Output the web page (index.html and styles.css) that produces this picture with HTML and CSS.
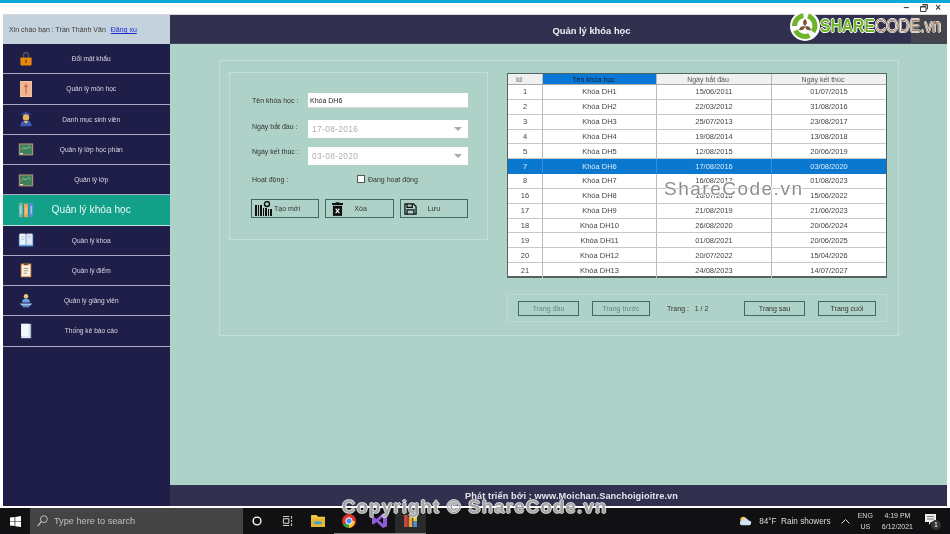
FILE: index.html
```html
<!DOCTYPE html>
<html lang="vi">
<head>
<meta charset="utf-8">
<title>Quản lý khóa học</title>
<link rel="stylesheet" href="styles.css">
</head>
<body>
<div class="screen">
  <div class="accent"></div>
  <div class="titlebar">
    <span class="winbtn">&#8211;</span>
    <svg class="winbtn-ico" width="8" height="8" viewBox="0 0 8 8"><path d="M2.500 .5h5v4.500h-1.500M.5 2.500h5.500v5h-5.500z" fill="none" stroke="#444"/><path d="M.5 3h5.500M2.500 1h5" stroke="#444"/></svg>
    <span class="winbtn close">&#215;</span>
  </div>
  <div class="app">
    <aside class="sidebar">
      <div class="greeting">Xin chào bạn : Trần Thành Văn <a href="#" class="logout">Đăng xu</a></div>
      <nav class="nav">
        <a class="nav-item"><svg class="nav-ico" viewBox="0 0 20 20"><path d="M7 8V5a3 3 0 0 1 6 0v3" fill="none" stroke="#5a5a5a" stroke-width="1.500"/><rect x="3" y="8" width="14" height="10" rx="1" fill="#e58a10"/><rect x="9" y="11" width="2" height="4" fill="#8a4a06"/></svg><span>Đổi mật khẩu</span></a>
        <a class="nav-item"><svg class="nav-ico" viewBox="0 0 20 20"><rect x="3" y="0" width="14" height="20" fill="#f2b48c" stroke="#f8d8c0"/><path d="M10 3v13M7.500 6.500h5" stroke="#9c4a2c"/></svg><span>Quản lý môn học</span></a>
        <a class="nav-item"><svg class="nav-ico" viewBox="0 0 20 20"><path d="M10 1l7 3-7 3-7-3z" fill="#34489a"/><circle cx="10" cy="8" r="4" fill="#e9b55a"/><path d="M3 19c0-5 3-7 7-7s7 2 7 7z" fill="#3f5bb8"/><path d="M7 12.500h6L10 16z" fill="#e9c25a"/></svg><span>Danh mục sinh viên</span></a>
        <a class="nav-item"><svg class="nav-ico" viewBox="0 0 20 20"><rect x="1" y="3" width="18" height="15" fill="#a98f70"/><rect x="2.500" y="4.500" width="15" height="12" fill="#3f7f5a"/><path d="M4 11l3-3 3 2 3-3 3 2" fill="none" stroke="#bfe3c8" stroke-width=".8"/><rect x="3" y="15" width="3" height="1.500" fill="#fff"/></svg><span>Quản lý lớp học phần</span></a>
        <a class="nav-item"><svg class="nav-ico" viewBox="0 0 20 20"><rect x="1" y="3" width="18" height="15" fill="#a98f70"/><rect x="2.500" y="4.500" width="15" height="12" fill="#3f7f5a"/><path d="M4 11l3-3 3 2 3-3 3 2" fill="none" stroke="#bfe3c8" stroke-width=".8"/><rect x="3" y="15" width="3" height="1.500" fill="#fff"/></svg><span>Quản lý lớp</span></a>
        <a class="nav-item active"><svg class="nav-ico" viewBox="0 0 20 20"><rect x="1" y="1" width="5" height="18" fill="#6fb7a8"/><rect x="7.500" y="2" width="5" height="17" fill="#e9a15c"/><rect x="14" y="1" width="5" height="18" fill="#4f8fd8"/><path d="M3.500 5v10M10 6v9M16.500 5v10" stroke="#e8f4f0"/></svg><span>Quản lý khóa học</span></a>
        <a class="nav-item"><svg class="nav-ico" viewBox="0 0 20 20"><rect x="1" y="3" width="18" height="15" fill="#5f9fe0"/><rect x="2" y="2" width="7.500" height="14" fill="#eef3fa"/><rect x="10.500" y="2" width="7.500" height="14" fill="#dfe8f4"/><path d="M4 6h4M4 9h4M12 6h4" stroke="#a8b8cc"/></svg><span>Quản lý khoa</span></a>
        <a class="nav-item"><svg class="nav-ico" viewBox="0 0 20 20"><rect x="3.500" y="2" width="13" height="17" fill="#e9a76a"/><rect x="5" y="4" width="10" height="13.500" fill="#fbf3e3"/><rect x="7.500" y="1" width="5" height="3" fill="#7a4a30"/><path d="M7 8h6M7 11h6M7 14h4" stroke="#8a7a6a"/></svg><span>Quản lý điểm</span></a>
        <a class="nav-item"><svg class="nav-ico" viewBox="0 0 20 20"><circle cx="10" cy="4" r="2.800" fill="#f2c77a"/><path d="M5 12c0-3 2-5 5-5s5 2 5 5z" fill="#6b9fe0"/><path d="M2 13h16l-3 3H5z" fill="#9cc4f0"/><rect x="6" y="16" width="8" height="2" fill="#5f86c4"/></svg><span>Quản lý giảng viên</span></a>
        <a class="nav-item"><svg class="nav-ico" viewBox="0 0 20 20"><rect x="4" y="1" width="12" height="18" fill="#dfe8f2"/><path d="M4 1h9v15H4z" fill="#f6f9fc"/><path d="M16 1v18" stroke="#9bb0c8"/></svg><span>Thống kê báo cáo</span></a>
      </nav>
    </aside>
    <main class="main">
      <header class="main-head">Quản lý khóa học</header>
      <div class="main-body">
        <section class="panel">
          <form class="form-box">
            <div class="field field-text"><label>Tên khóa học :</label><input class="input" type="text" value="Khóa DH6"></div>
            <div class="field field-date"><label>Ngày bắt đầu :</label><div class="date">17-08-2016<i class="caret"></i></div></div>
            <div class="field field-date2"><label>Ngày kết thúc :</label><div class="date">03-08-2020<i class="caret"></i></div></div>
            <div class="field field-check"><label>Hoạt động :</label><span class="check"><i class="box"></i>Đang hoạt động</span></div>
            <div class="actions">
              <button type="button" class="btn btn-new"><svg width="17" height="15" viewBox="0 0 17 15"><path d="M0 4h2v11H0zM3 4h1v11H3zM5 4h2v11H5zM8 7h1v8H8zM10 7h2v8h-2zM13 8h1v7h-1zM15 8h2v7h-2z" fill="#111"/><circle cx="12" cy="3" r="2.500" fill="none" stroke="#111" stroke-width="1.400"/></svg><span>Tạo mới</span></button>
              <button type="button" class="btn btn-del"><svg width="11" height="14" viewBox="0 0 12 15"><path d="M4 0h4v1h4v2H0V1h4z" fill="#111"/><path d="M1 4h10v11H1z" fill="#111"/><path d="M4 7l4 5M8 7l-4 5" stroke="#fff" stroke-width="1.200"/></svg><span>Xóa</span></button>
              <button type="button" class="btn btn-save"><svg width="13" height="12" viewBox="0 0 15 14"><path d="M1 1h10l3 3v9H1z" fill="none" stroke="#111" stroke-width="1.500"/><path d="M3.500 1v4h6V1M3.500 13V8h8v5" fill="none" stroke="#111" stroke-width="1.500"/></svg><span>Lưu</span></button>
            </div>
          </form>
          <div class="right">
            <div class="grid-table">
              <div class="tr th"><div>Id</div><div class="sel">Tên khóa học</div><div>Ngày bắt đầu</div><div>Ngày kết thúc</div></div>
              <div class="tr"><div>1</div><div>Khóa DH1</div><div>15/06/2011</div><div>01/07/2015</div></div>
              <div class="tr"><div>2</div><div>Khóa DH2</div><div>22/03/2012</div><div>31/08/2016</div></div>
              <div class="tr"><div>3</div><div>Khóa DH3</div><div>25/07/2013</div><div>23/08/2017</div></div>
              <div class="tr"><div>4</div><div>Khóa DH4</div><div>19/08/2014</div><div>13/08/2018</div></div>
              <div class="tr"><div>5</div><div>Khóa DH5</div><div>12/08/2015</div><div>20/06/2019</div></div>
              <div class="tr on"><div>7</div><div>Khóa DH6</div><div>17/08/2016</div><div>03/08/2020</div></div>
              <div class="tr"><div>8</div><div>Khóa DH7</div><div>16/08/2017</div><div>01/08/2023</div></div>
              <div class="tr"><div>16</div><div>Khóa DH8</div><div>16/07/2018</div><div>15/06/2022</div></div>
              <div class="tr"><div>17</div><div>Khóa DH9</div><div>21/08/2019</div><div>21/06/2023</div></div>
              <div class="tr"><div>18</div><div>Khóa DH10</div><div>26/08/2020</div><div>20/06/2024</div></div>
              <div class="tr"><div>19</div><div>Khóa DH11</div><div>01/08/2021</div><div>20/06/2025</div></div>
              <div class="tr"><div>20</div><div>Khóa DH12</div><div>20/07/2022</div><div>15/04/2026</div></div>
              <div class="tr"><div>21</div><div>Khóa DH13</div><div>24/08/2023</div><div>14/07/2027</div></div>
            </div>
            <div class="pager">
              <button type="button" class="pg pg1 off">Trang đầu</button>
              <button type="button" class="pg pg2 off">Trang trước</button>
              <span class="pg-info">Trang :&nbsp;&nbsp; 1 / 2</span>
              <button type="button" class="pg pg3">Trang sau</button>
              <button type="button" class="pg pg4">Trang cuối</button>
            </div>
          </div>
        </section>
      </div>
      <footer class="main-foot">Phát triển bởi : www.Moichan.Sanchoigioitre.vn</footer>
    </main>
  </div>
  <div class="taskbar">
    <div class="start"><svg width="11" height="11" viewBox="0 0 15 15"><path d="M0 2.200l6.300-.9v5.800H0zM7.200 1.200L15 0v7.100H7.200zM0 8h6.300v5.800L0 12.900zM7.200 8H15v7l-7.800-1.100z" fill="#fff"/></svg></div>
    <div class="search"><svg width="11" height="12" viewBox="0 0 12 13"><circle cx="7.500" cy="4.500" r="3.700" fill="none" stroke="#ccc"/><path d="M4.800 7.300L.7 12" stroke="#ccc" stroke-width="1.200"/></svg><span>Type here to search</span></div>
    <div class="tb-icons">
      <span class="tb-i"><svg width="10" height="10" viewBox="0 0 11 11"><circle cx="5.500" cy="5.500" r="4.300" fill="none" stroke="#fff" stroke-width="1.500"/></svg></span>
      <span class="tb-i"><svg width="11" height="10" viewBox="0 0 12 11"><path d="M1 .5h7M1 10.500h7M1.500 3h6v5h-6zM10.500 0v3M10.500 4.500v2M10.500 8v3" fill="none" stroke="#eee"/></svg></span>
      <span class="tb-i"><svg width="14" height="12" viewBox="0 0 15 13"><path d="M0 0h6l1.500 2H15v11H0z" fill="#f5c842"/><rect x="0" y="4" width="15" height="9" fill="#e8b530"/><rect x="3.500" y="7" width="8" height="3" fill="#3aa0dc"/></svg></span>
      <span class="tb-i run"><svg width="14" height="14" viewBox="0 0 14 14"><circle cx="7" cy="7" r="7" fill="#e0352b"/><path d="M7 7L1 10.500A7 7 0 0 0 7 14z" fill="#2f9e44"/><path d="M7 7l6 0A7 7 0 0 1 7 14z" fill="#f7c62f"/><circle cx="7" cy="7" r="3.200" fill="#4a8df0" stroke="#fff"/></svg></span>
      <span class="tb-i run"><svg width="15" height="15" viewBox="0 0 15 15"><path d="M11 0l4 1.800v11.400L11 15 4.500 9 1.500 11.500 0 10.700V4.300l1.500-.8L4.500 6zM11 4L7 7.500l4 3.500z" fill="#8f5bd6"/></svg></span>
      <span class="tb-i run app-open"><svg width="13" height="12" viewBox="0 0 14 13"><rect width="4" height="13" fill="#c9473a"/><rect x="5" y="2" width="4" height="11" fill="#e8a33a"/><rect x="10" y="0" width="4" height="7" fill="#e9d13a"/><rect x="10" y="7" width="4" height="6" fill="#4f8fd8"/></svg></span>
    </div>
    <div class="tray">
      <svg width="13" height="10" viewBox="0 0 15 11"><circle cx="5" cy="4" r="3.500" fill="#f2c14e"/><path d="M3 10.500a3 3 0 0 1 .5-5.800A4 4 0 0 1 11 5a2.800 2.800 0 0 1 1 5.500z" fill="#cfe3f5"/></svg>
      <span class="weather">84°F&nbsp; Rain showers</span>
      <svg class="chev" width="9" height="5" viewBox="0 0 9 5"><path d="M.5 4.500l4-4 4 4" fill="none" stroke="#ddd"/></svg>
      <span class="lang">ENG<br>US</span>
      <span class="clock">4:19 PM<br>6/12/2021</span>
      <span class="notif"><svg width="11" height="11" viewBox="0 0 11 11"><path d="M0 0h11v8H6l-2 3V8H0z" fill="#eee"/><path d="M2 2.500h7M2 5h7" stroke="#777"/></svg><b>1</b></span>
    </div>
  </div>
  <div class="logo">
    <svg width="30" height="30" viewBox="0 0 30 30"><circle cx="15" cy="15" r="15" fill="#fff"/><path d="M4.500 15a10.500 10.500 0 0 1 9-10.400M18 4.900a10.500 10.500 0 0 1 5 15.900M19.500 24.500A10.500 10.500 0 0 1 5.500 19.500" fill="none" stroke="#6fb52c" stroke-width="5"/><path d="M15 8c2.500 2 2.500 5 0 7-2.500-2-2.500-5 0-7zM9 19c.5-3 2.800-4.400 6-3.500-.5 3-2.800 4.400-6 3.500zM21 19c-3.200.9-5.500-.5-6-3.500 3.200-.9 5.500.5 6 3.500z" fill="#7a5230"/></svg>
    <span class="logo-text"><span class="logo-a">SHARE</span><span class="logo-b">CODE.vn</span></span>
  </div>
  <div class="wm wm1">ShareCode.vn</div>
  <div class="wm wm2">Copyright © ShareCode.vn</div>
</div>
</body>
</html>
```
FILE: styles.css
```css
* { box-sizing: border-box; }
html, body { margin: 0; padding: 0; background: #fff; }
body { font-family: "Liberation Sans", Arial, sans-serif; font-size: 8px; color: #333; overflow: hidden; }
.screen { position: relative; width: 950px; height: 534px; display: flex; flex-direction: column; overflow: hidden; filter: blur(.4px); }
.accent { height: 3px; background: #0fa7d6; flex: none; }
.titlebar { height: 11px; flex: none; display: flex; justify-content: flex-end; align-items: center; gap: 9px; padding: 0 9px 2px 0; background: #fff; }
.winbtn { font-size: 10px; line-height: 10px; color: #444; font-weight: bold; }
.winbtn-ico { display: block; margin: 0 -2px 0 2px; }
.app { flex: none; height: 492px; margin: 0 3px 0 3px; display: flex; border-top: 1px solid #d8d8d8; }
.sidebar { width: 167px; flex: none; background: #1e1e48; display: flex; flex-direction: column; }
.greeting { height: 29px; flex: none; background: #c3d2dd; color: #3b3b3b; font-size: 7px; display: flex; align-items: center; gap: 3px; padding-left: 6px; white-space: pre; }
.logout { color: #1b2ad8; text-decoration: underline; }
.nav { display: flex; flex-direction: column; }
.nav-item { height: 30.25px; flex: none; display: flex; align-items: center; color: #d8d8e8; font-size: 6.600px; border-bottom: 1.500px solid #a9a9c4; background: #1e1e48; padding-left: 14.500px; }
.nav-item span { flex: 1; text-align: center; padding-right: 21px; }
.nav-ico { width: 16px; height: 16px; flex: none; }
.nav-item.active { background: #12a088; color: #eafaf6; font-size: 10.200px; border-bottom-color: #bfe6dc; }
.main { flex: 1; display: flex; flex-direction: column; min-width: 0; }
.main-head { height: 29px; flex: none; background: linear-gradient(to right, #32304f 741px, #44444e 741px); color: #f0f0f5; font-size: 9.400px; font-weight: bold; display: flex; align-items: center; justify-content: center; padding-left: 66px; padding-top: 2px; border-bottom: 1px solid #3c4a55; }
.main-body { flex: 1; background: #aed1c8; padding: 16px 48px 0 49px; min-height: 0; }
.panel { height: 276px; border: 1px solid #c5dfd8; display: flex; align-items: flex-start; padding: 11px 11px 0 9px; gap: 19px; }
.form-box { width: 259px; height: 168px; flex: none; border: 1px solid #c5dfd8; padding: 20px 19px 0 22px; display: flex; flex-direction: column; color: #333; font-size: 7px; }
.field { display: flex; align-items: center; }
.field label { width: 56px; flex: none; white-space: nowrap; }
.field-text { height: 15px; }
.input { width: 160px; height: 15px; border: 0; border-bottom: 1px solid #d5d5d5; background: #fff; padding: 0 2px; font: 7px "Liberation Sans", Arial, sans-serif; color: #222; }
.field-date { height: 18px; margin-top: 12px; }
.field-date2 { height: 18px; margin-top: 9px; }
.field-date2 label { margin-top: -9px; }
.field-date label { margin-top: -5px; }
.date { width: 160px; height: 100%; background: #fff; color: #b0b0b0; font-size: 8.400px; letter-spacing: .35px; display: flex; align-items: center; justify-content: space-between; padding: 0 6px 0 4px; }
.caret { width: 0; height: 0; border-left: 4px solid transparent; border-right: 4px solid transparent; border-top: 4px solid #aaa; }
.field-check { height: 10px; margin-top: 9px; }
.check { display: flex; align-items: center; gap: 3px; margin-left: 49px; }
.box { width: 8px; height: 8px; background: #fff; border: 1px solid #555; display: block; }
.actions { display: flex; gap: 6px; margin: 15px 0 0 -1px; }
.btn { width: 68.500px; height: 19px; border: 1px solid #3f6a64; background: transparent; padding: 0; display: flex; align-items: center; font: 7px "Liberation Sans", Arial, sans-serif; color: #333; }
.btn-new svg { margin-left: 3px; }
.btn-new span { margin-left: 2px; }
.btn-del svg { margin-left: 6px; }
.btn-del span { margin-left: 11px; }
.btn-save svg { margin-left: 3px; }
.btn-save span { margin-left: 11px; }
.right { width: 380px; flex: none; display: flex; flex-direction: column; }
.grid-table { height: 205px; margin-top: 1px; border: 1px solid #4f6460; border-bottom-width: 2px; background: #fff; display: flex; flex-direction: column; color: #444; font-size: 7.500px; }
.tr { display: grid; grid-template-columns: 35px 114px 115px 1fr; height: 14.850px; flex: none; border-bottom: 1px solid #c8c8c8; }
.tr:last-child { border-bottom: 0; }
.tr > div { display: flex; align-items: center; justify-content: center; border-right: 1px solid #bbb; white-space: nowrap; }
.tr > div:last-child { border-right: 0; }
.th { height: 11px; background: #f0f0f0; color: #555; font-size: 7px; border-bottom: 1px solid #aaa; }
.tr.th > div { padding-right: 12px; }
.th .sel { background: #0a78d6; color: #123; }
.on { background: #0a78cf; color: #dcecfa; border-bottom-color: #0a78cf; }
.on > div { border-right-color: #3a90d8; }
.pager { height: 28px; margin-top: 16px; border: 1px solid #bedad3; display: flex; align-items: center; padding: 0 10px; font-size: 7px; color: #333; }
.pg { height: 15px; background: transparent; border: 1px solid #3f6a64; padding: 0; font: 7px "Liberation Sans", Arial, sans-serif; color: #333; }
.pg.off { color: #648a82; }
.pg1 { width: 61px; }
.pg2 { width: 58px; margin-left: 13px; }
.pg-info { margin-left: 17px; width: 77px; white-space: pre; }
.pg3 { width: 61px; }
.pg4 { width: 58px; margin-left: 13px; }
.main-foot { height: 21px; flex: none; background: #32304f; color: #e4e4ec; font-size: 9.200px; font-weight: bold; display: flex; align-items: center; justify-content: center; padding-left: 26px; letter-spacing: .1px; }
.taskbar { position: relative; flex: none; height: 26px; margin-top: 2px; background: #111113; display: flex; align-items: center; color: #ddd; }
.start { width: 30px; display: flex; justify-content: center; }
.search { width: 213px; height: 26px; background: #444; display: flex; align-items: center; gap: 6px; padding-left: 7px; color: #c0c0c0; font-size: 9.200px; }
.tb-icons { display: flex; margin-left: -1px; }
.tb-i { width: 30.600px; height: 26px; display: flex; align-items: center; justify-content: center; }
.run { border-bottom: 1px solid #888; }
.app-open { background: #2a2a2c; }
.tray { margin-left: auto; display: flex; align-items: center; padding-right: 13px; color: #ddd; font-size: 8.200px; }
.weather { margin-left: 7px; }
.chev { margin-left: 10px; }
.lang { margin-left: 8px; text-align: center; font-size: 7px; line-height: 11px; }
.clock { margin-left: 9px; text-align: center; font-size: 7px; line-height: 11px; }
.notif { position: relative; margin-left: 12px; display: block; width: 12px; height: 14px; }
.notif b { position: absolute; right: -4px; bottom: -2px; width: 10px; height: 10px; border-radius: 50%; background: #333; color: #fff; font: 7px/10px "Liberation Sans", Arial, sans-serif; text-align: center; }
.logo { position: absolute; left: 790px; top: 11px; display: flex; align-items: center; height: 30px; }
.logo svg { flex: none; }
.logo-text { display: inline-block; white-space: nowrap; transform: scaleX(.825); transform-origin: left center; font: bold 19px "Liberation Sans", Arial, sans-serif; text-shadow: 1px 0 #fff, -1px 0 #fff, 0 1px #fff, 0 -1px #fff; }
.logo-a { color: #6fb52c; }
.logo-b { color: #fff; -webkit-text-stroke: .7px #7a5a38; font-weight: normal; }
.wm { position: absolute; white-space: nowrap; font-family: "Liberation Sans", Arial, sans-serif; }
.wm1 { left: 664px; top: 178px; font-size: 19px; letter-spacing: 1.500px; color: #8e8e8e; text-shadow: 1px 0 #fff, -1px 0 #fff, 0 1px #fff, 0 -1px #fff; }
.wm2 { left: 342px; top: 496px; font-size: 18.400px; font-weight: bold; letter-spacing: 1.300px; color: #a2a2a2; text-shadow: 1px 0 rgba(255,255,255,.7), -1px 0 rgba(255,255,255,.7), 0 1px rgba(255,255,255,.7), 0 -1px rgba(255,255,255,.7); }
```
